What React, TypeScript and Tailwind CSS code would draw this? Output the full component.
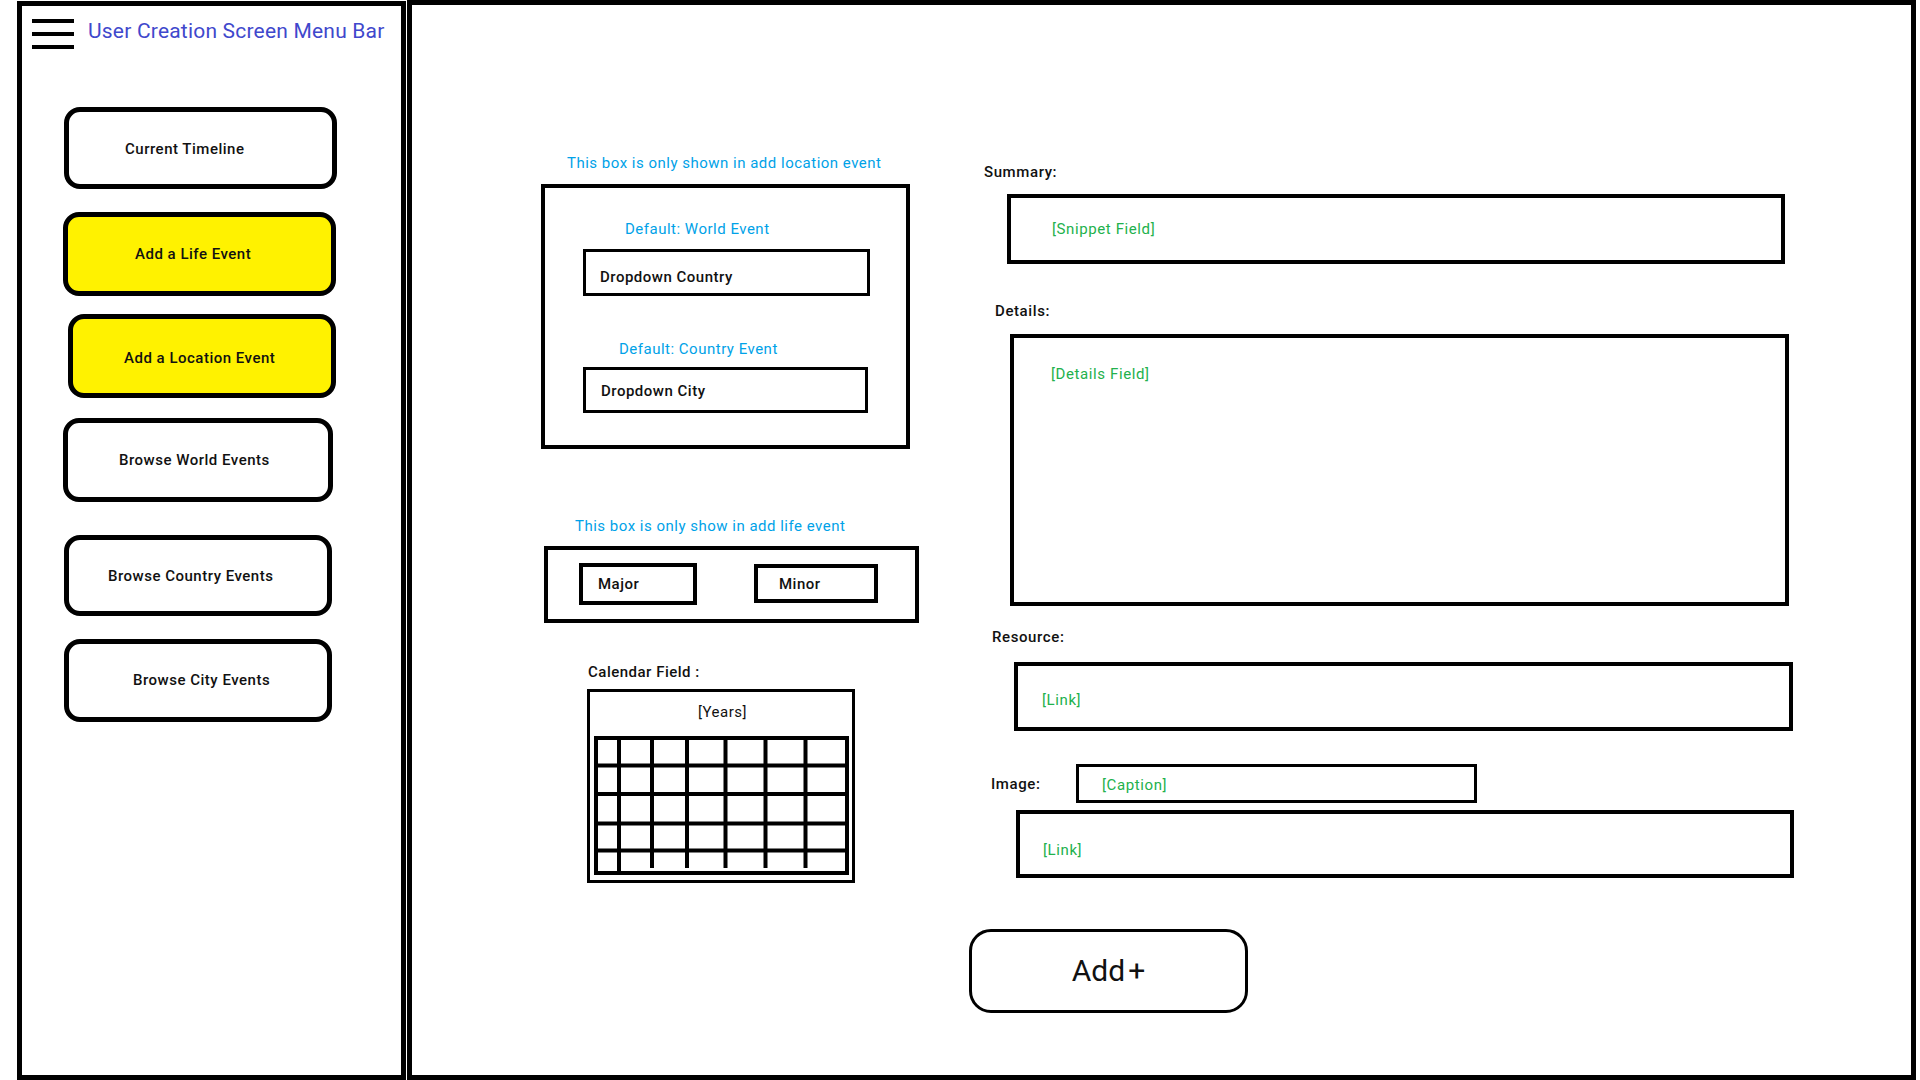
const SIDE_BUTTONS = [
  { label: 'Current Timeline', cls: 'mt-[58px] ml-[42px] w-[273px] h-[82px] pl-[56px] pt-[2px] bg-white' },
  { label: 'Add a Life Event', cls: 'mt-[23px] ml-[41px] w-[273px] h-[84px] pl-[67px] bg-[#fff200]' },
  { label: 'Add a Location Event', cls: 'mt-[18px] ml-[46px] w-[268px] h-[84px] pl-[51px] pt-[5px] bg-[#fff200]' },
  { label: 'Browse World Events', cls: 'mt-[20px] ml-[41px] w-[270px] h-[84px] pl-[51px] bg-white' },
  { label: 'Browse Country Events', cls: 'mt-[33px] ml-[42px] w-[268px] h-[81px] pl-[39px] pt-[2px] bg-white' },
  { label: 'Browse City Events', cls: 'mt-[23px] ml-[42px] w-[268px] h-[83px] pl-[64px] bg-white' },
]

function CalendarGrid() {
  const cols = [25, 58, 93, 131.5, 171.5, 211.5]
  const rows = [29.5, 58, 87.5, 114.5]
  return (
    <svg width="256" height="139" viewBox="0 0 256 139" className="block">
      <rect x="2" y="2" width="251" height="135" fill="none" stroke="black" strokeWidth="4" />
      {rows.map((y) => (
        <line key={y} x1="2" x2="253" y1={y} y2={y} stroke="black" strokeWidth="4" />
      ))}
      {cols.map((x, i) => (
        <line key={x} x1={x} x2={x} y1="2" y2={i === 0 ? 137 : 132} stroke="black" strokeWidth="4" />
      ))}
    </svg>
  )
}

function Sidebar() {
  return (
    <div className="ml-[17px] mt-[1px] w-[389px] h-[1079px] border-[5px] border-black flex flex-col items-start shrink-0">
      {/* header */}
      <div className="flex items-start pt-[13px] pl-[10px]">
        <div className="flex flex-col gap-[9px] w-[42px]">
          <span className="block h-[4px] bg-black" />
          <span className="block h-[4px] bg-black" />
          <span className="block h-[4px] bg-black" />
        </div>
        <h1 className="ml-[14px] text-[21px] leading-[24px] tracking-[0.2px] text-[#3f48cc] whitespace-nowrap">User Creation Screen Menu Bar</h1>
      </div>

      {SIDE_BUTTONS.map((b) => (
        <button
          key={b.label}
          className={`${b.cls} shrink-0 flex items-center border-[5px] border-black rounded-[16px] text-[15px] tracking-[0.5px] font-medium text-[#111] whitespace-nowrap`}
        >
          {b.label}
        </button>
      ))}
    </div>
  )
}

function LeftColumn() {
  return (
    <div className="w-[520px] shrink-0 flex flex-col items-start">
      {/* location box */}
      <p className="mt-[149px] ml-[155px] text-[15px] leading-[18px] tracking-[0.5px] text-[#00a2e8] whitespace-nowrap">This box is only shown in add location event</p>
      <div className="mt-[12px] ml-[129px] w-[369px] h-[265px] border-[4px] border-black flex flex-col items-start">
        <p className="mt-[32px] ml-[80px] text-[15px] leading-[18px] tracking-[0.5px] text-[#00a2e8] whitespace-nowrap">Default: World Event</p>
        <div className="mt-[11px] ml-[38px] w-[287px] h-[47px] border-[3px] border-black flex items-center pl-[14px] pt-[9px] text-[15px] tracking-[0.5px] font-medium text-[#111]">
          Dropdown Country
        </div>
        <p className="mt-[44px] ml-[74px] text-[15px] leading-[18px] tracking-[0.5px] text-[#00a2e8] whitespace-nowrap">Default: Country Event</p>
        <div className="mt-[9px] ml-[38px] w-[285px] h-[46px] border-[3px] border-black flex items-center pl-[15px] pt-[2px] text-[15px] tracking-[0.5px] font-medium text-[#111]">
          Dropdown City
        </div>
      </div>

      {/* life box */}
      <p className="mt-[68px] ml-[163px] text-[15px] leading-[18px] tracking-[0.5px] text-[#00a2e8] whitespace-nowrap">This box is only show in add life event</p>
      <div className="mt-[11px] ml-[132px] w-[375px] h-[77px] border-[4px] border-black flex items-start">
        <div className="mt-[13px] ml-[31px] w-[118px] h-[42px] border-[4px] border-black flex items-center pl-[15px] text-[15px] tracking-[0.5px] font-medium text-[#111]">Major</div>
        <div className="mt-[14px] ml-[57px] w-[124px] h-[39px] border-[4px] border-black flex items-center pl-[21px] pt-[2px] text-[15px] tracking-[0.5px] font-medium text-[#111]">Minor</div>
      </div>

      {/* calendar */}
      <p className="mt-[40px] ml-[176px] text-[15px] leading-[18px] tracking-[0.5px] font-medium text-[#111] whitespace-nowrap">Calendar Field :</p>
      <div className="mt-[8px] ml-[175px] w-[268px] h-[194px] border-[3px] border-black flex flex-col items-start">
        <p className="mt-[11px] w-full pl-[3px] text-center text-[15px] leading-[18px] tracking-[0.5px] text-[#111]">[Years]</p>
        <div className="mt-[15px] ml-[4px]">
          <CalendarGrid />
        </div>
      </div>
    </div>
  )
}

function RightColumn() {
  return (
    <div className="flex-1 flex flex-col items-start">
      <p className="mt-[158px] ml-[52px] text-[15px] leading-[18px] tracking-[0.6px] font-medium text-[#111]">Summary:</p>
      <div className="mt-[13px] ml-[75px] w-[778px] h-[70px] border-[4px] border-black flex items-center pl-[41px] text-[15px] tracking-[0.6px] text-[#22b14c]">
        [Snippet Field]
      </div>

      <p className="mt-[38px] ml-[63px] text-[15px] leading-[18px] tracking-[0.6px] font-medium text-[#111]">Details:</p>
      <div className="mt-[14px] ml-[78px] w-[779px] h-[272px] border-[4px] border-black pl-[37px] pt-[27px] text-[15px] leading-[18px] tracking-[0.6px] text-[#22b14c]">
        [Details Field]
      </div>

      <p className="mt-[22px] ml-[60px] text-[15px] leading-[18px] tracking-[0.6px] font-medium text-[#111]">Resource:</p>
      <div className="mt-[16px] ml-[82px] w-[779px] h-[69px] border-[4px] border-black flex items-center pl-[24px] pt-[7px] text-[15px] tracking-[0.6px] text-[#22b14c]">
        [Link]
      </div>

      <div className="mt-[33px] ml-[59px] flex items-center">
        <p className="w-[85px] text-[15px] leading-[18px] tracking-[0.6px] font-medium text-[#111]">Image:</p>
        <div className="w-[401px] h-[39px] border-[3px] border-black flex items-center pl-[23px] pt-[4px] text-[15px] tracking-[0.6px] text-[#22b14c]">
          [Caption]
        </div>
      </div>
      <div className="mt-[7px] ml-[84px] w-[778px] h-[68px] border-[4px] border-black flex items-center pl-[23px] pt-[12px] text-[15px] tracking-[0.6px] text-[#22b14c]">
        [Link]
      </div>

      <button className="mt-[51px] ml-[37px] w-[279px] h-[84px] border-[3px] border-black rounded-[22px] flex items-center justify-center pb-[2px] text-[30px] text-[#111]">
        Add<span className="ml-[3px]">+</span>
      </button>
    </div>
  )
}

export default function App() {
  return (
    <div className="flex w-[1920px] h-[1080px] bg-white overflow-hidden font-['Roboto',sans-serif]">
      <Sidebar />
      <main className="ml-[1px] w-[1509px] h-[1080px] border-[5px] border-black flex shrink-0">
        <LeftColumn />
        <RightColumn />
      </main>
    </div>
  )
}
